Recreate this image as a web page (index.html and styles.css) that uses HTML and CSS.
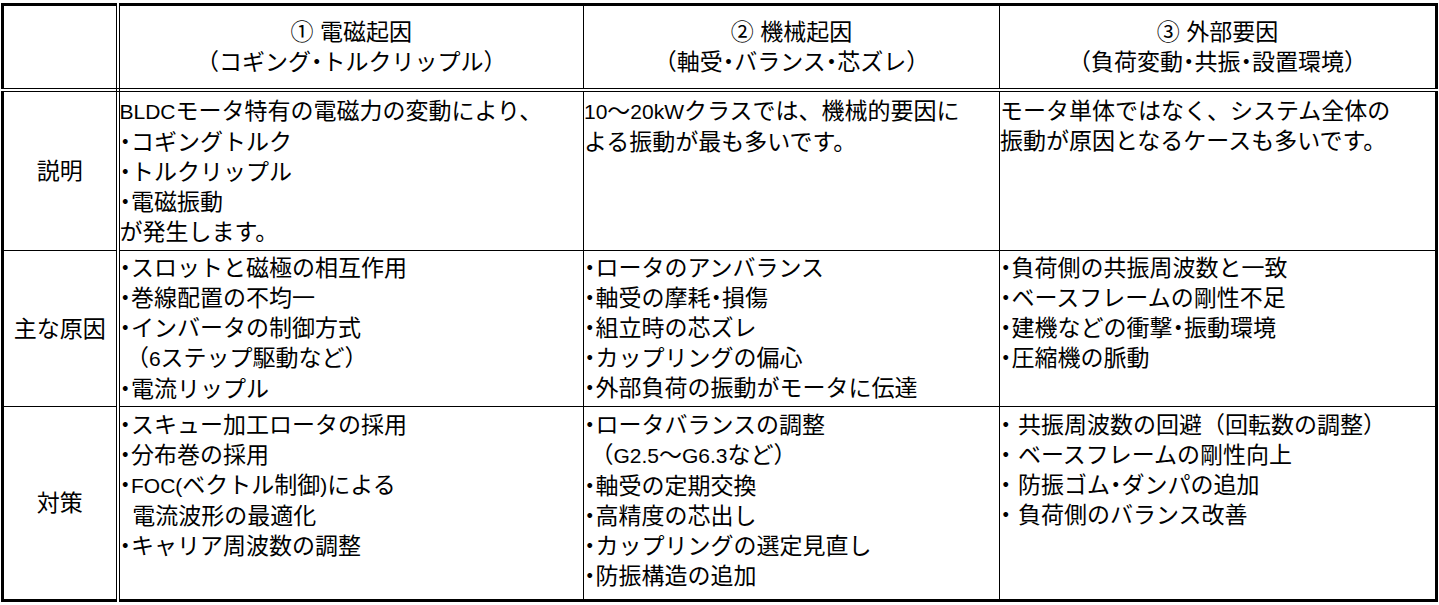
FILE: index.html
```html
<!DOCTYPE html>
<html lang="ja">
<head>
<meta charset="utf-8">
<title>振動要因</title>
<link rel="stylesheet" href="styles.css">
</head>
<body>
<table class="grid">
  <colgroup>
    <col class="c-label">
    <col class="c-a">
    <col class="c-b">
    <col class="c-c">
  </colgroup>
  <thead>
    <tr class="r-head">
      <th class="corner"></th>
      <th class="head"><div>① 電磁起因</div><div>（コギング<span class="d">・</span>トルクリップル）</div></th>
      <th class="head"><div>② 機械起因</div><div>（軸受<span class="d">・</span>バランス<span class="d">・</span>芯ズレ）</div></th>
      <th class="head"><div>③ 外部要因</div><div>（負荷変動<span class="d">・</span>共振<span class="d">・</span>設置環境）</div></th>
    </tr>
  </thead>
  <tbody>
    <tr class="r-1">
      <th class="label">説明</th>
      <td class="cell c2"><div><span class="lat">BLDC</span>モータ特有の電磁力の変動により、</div><div><span class="d">・</span>コギングトルク</div><div><span class="d">・</span>トルクリップル</div><div><span class="d">・</span>電磁振動</div><div>が発生します。</div></td>
      <td class="cell c3"><div><span class="lat">10</span>～<span class="lat">20kW</span>クラスでは、機械的要因に</div><div>よる振動が最も多いです。</div></td>
      <td class="cell c4"><div>モータ単体ではなく、システム全体の</div><div>振動が原因となるケースも多いです。</div></td>
    </tr>
    <tr class="r-2">
      <th class="label">主な原因</th>
      <td class="cell c2"><div><span class="d">・</span>スロットと磁極の相互作用</div><div><span class="d">・</span>巻線配置の不均一</div><div><span class="d">・</span>インバータの制御方式</div><div> （<span class="lat">6</span>ステップ駆動など）</div><div><span class="d">・</span>電流リップル</div></td>
      <td class="cell c3"><div><span class="d">・</span>ロータのアンバランス</div><div><span class="d">・</span>軸受の摩耗<span class="d">・</span>損傷</div><div><span class="d">・</span>組立時の芯ズレ</div><div><span class="d">・</span>カップリングの偏心</div><div><span class="d">・</span>外部負荷の振動がモータに伝達</div></td>
      <td class="cell c4"><div><span class="d">・</span>負荷側の共振周波数と一致</div><div><span class="d">・</span>ベースフレームの剛性不足</div><div><span class="d">・</span>建機などの衝撃<span class="d">・</span>振動環境</div><div><span class="d">・</span>圧縮機の脈動</div></td>
    </tr>
    <tr class="r-3">
      <th class="label">対策</th>
      <td class="cell c2"><div><span class="d">・</span>スキュー加工ロータの採用</div><div><span class="d">・</span>分布巻の採用</div><div><span class="d">・</span><span class="lat">FOC(</span>ベクトル制御<span class="lat">)</span>による</div><div>  電流波形の最適化</div><div><span class="d">・</span>キャリア周波数の調整</div></td>
      <td class="cell c3"><div><span class="d">・</span>ロータバランスの調整</div><div> （<span class="lat">G2.5</span>～<span class="lat">G6.3</span>など）</div><div><span class="d">・</span>軸受の定期交換</div><div><span class="d">・</span>高精度の芯出し</div><div><span class="d">・</span>カップリングの選定見直し</div><div><span class="d">・</span>防振構造の追加</div></td>
      <td class="cell c4"><div><span class="d">・</span> 共振周波数の回避（回転数の調整）</div><div><span class="d">・</span> ベースフレームの剛性向上</div><div><span class="d">・</span> 防振ゴム<span class="d">・</span>ダンパの追加</div><div><span class="d">・</span> 負荷側のバランス改善</div></td>
    </tr>
  </tbody>
</table>
</body>
</html>
```
FILE: styles.css
```css
html, body {
  margin: 0;
  padding: 0;
  background: #ffffff;
}
body {
  padding: 3px 0 0 1px;
  font-family: "Liberation Sans", "Noto Sans CJK JP", sans-serif;
  font-size: 23px;
  line-height: 30px;
  color: #000000;
}
.d {
  font-feature-settings: "palt";
}
.lat {
  font-size: 21px;
}
.grid {
  border-collapse: collapse;
  table-layout: fixed;
  width: 1437px;
  border: 3px solid #000;
}
.c-label { width: 115px; }
.c-a { width: 466px; }
.c-b { width: 416px; }
.c-c { width: 437px; }

.grid th, .grid td {
  border: 1px solid #000;
  padding: 0;
  font-weight: normal;
}
.grid th.label,
.grid th.corner {
  border-right: 4px double #000;
  text-align: center;
  vertical-align: middle;
}
.r-head th {
  border-bottom: 4px double #000;
}
.r-head { height: 85px; }
.r-1 { height: 161px; }
.r-2 { height: 156px; }
.r-3 { height: 194px; }

.head {
  text-align: center;
  vertical-align: middle;
}
.head div { white-space: pre; }

.cell {
  vertical-align: top;
  text-align: left;
  padding: 3px 0 0 3px;
}
.cell div { white-space: pre; }
.c2 { padding-left: 2px; }
.c3 { padding-left: 3px; }
.c4 { padding-left: 4px; }
.r-1 .cell { padding-top: 4px; }
.r-2 .cell { padding-top: 2px; }
.r-3 .cell { padding-top: 3px; }
```
